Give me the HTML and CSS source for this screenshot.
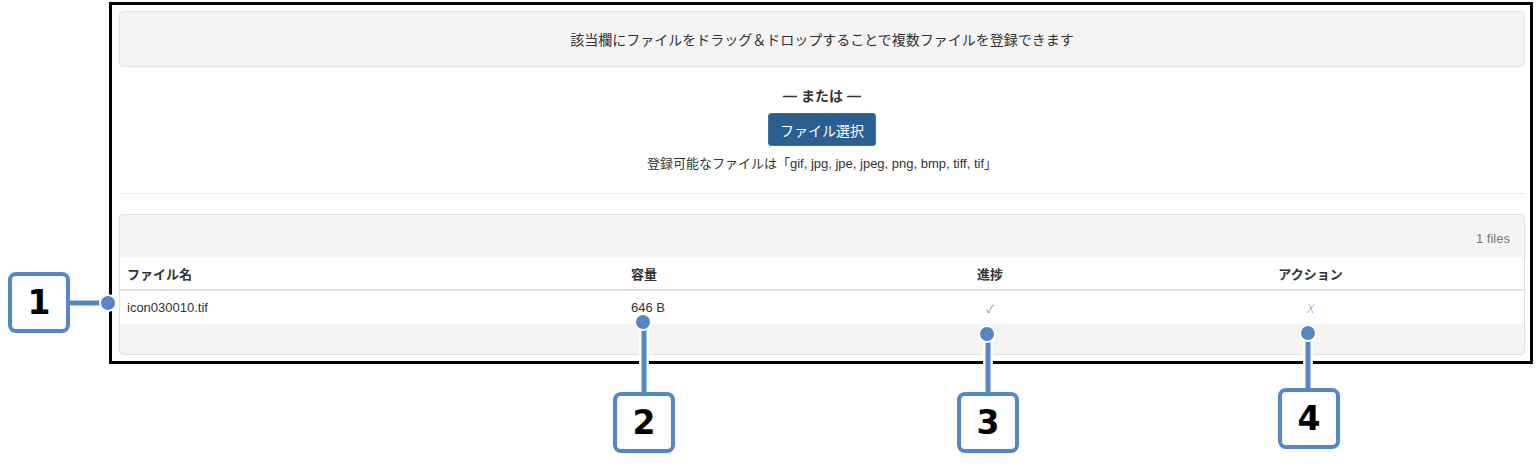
FILE: index.html
```html
<!DOCTYPE html>
<html lang="ja">
<head>
<meta charset="utf-8">
<link rel="stylesheet" href="styles.css">
</head>
<body>
<div class="frame">
  <div class="dropzone">該当欄にファイルをドラッグ＆ドロップすることで複数ファイルを登録できます</div>
  <div class="select-area">
    <div class="or">— または —</div>
    <button class="btn">ファイル選択</button>
    <div class="note">登録可能なファイルは「gif, jpg, jpe, jpeg, png, bmp, tiff, tif」</div>
  </div>
  <div class="sep"></div>
  <div class="files">
    <div class="files-head">1 files</div>
    <table class="tbl">
      <colgroup>
        <col class="c1"><col class="c2"><col class="c3"><col class="c4">
      </colgroup>
      <thead>
        <tr><th>ファイル名</th><th>容量</th><th class="ctr">進捗</th><th class="ctr">アクション</th></tr>
      </thead>
      <tbody>
        <tr><td>icon030010.tif</td><td>646 B</td><td class="ctr check">✓</td><td class="ctr del">X</td></tr>
      </tbody>
    </table>
    <div class="files-foot"></div>
  </div>
</div>

<svg class="leaders" width="1536" height="471" viewBox="0 0 1536 471">
  <g stroke="#fff" stroke-width="10" stroke-linecap="round" fill="none">
    <line x1="70" y1="303" x2="108" y2="303"/>
    <line x1="644" y1="322" x2="644" y2="392"/>
    <line x1="988" y1="334" x2="988" y2="392"/>
    <line x1="1308" y1="333" x2="1308" y2="388"/>
  </g>
  <g stroke="#5586c6" stroke-width="5" fill="none">
    <line x1="70" y1="303" x2="108" y2="303"/>
    <line x1="644" y1="322" x2="644" y2="392"/>
    <line x1="988" y1="334" x2="988" y2="392"/>
    <line x1="1308" y1="333" x2="1308" y2="388"/>
  </g>
  <g fill="#5586c6" stroke="#fff" stroke-width="2">
    <circle cx="108" cy="303" r="8"/>
    <circle cx="643" cy="322" r="8"/>
    <circle cx="987" cy="334" r="8"/>
    <circle cx="1308" cy="333" r="8"/>
  </g>
</svg>
<div class="callout n1">1</div>
<div class="callout n2">2</div>
<div class="callout n3">3</div>
<div class="callout n4">4</div>
</body>
</html>
```

FILE: styles.css
```css
html, body {
  margin: 0;
  padding: 0;
  background: #fff;
}
body {
  font-family: "Liberation Sans", "Noto Sans CJK JP", sans-serif;
  font-size: 13px;
  color: #333;
  position: relative;
  width: 1536px;
  height: 471px;
  overflow: hidden;
}
.frame {
  box-sizing: border-box;
  margin: 2px 0 0 109px;
  width: 1424px;
  height: 362px;
  border: 3px solid #000;
  padding: 6px 5px 0 7px;
}
.dropzone {
  box-sizing: border-box;
  height: 56px;
  background: #f4f4f4;
  border: 1px solid #e3e3e3;
  border-radius: 4px;
  display: flex;
  align-items: center;
  justify-content: center;
  font-size: 14px;
  color: #333;
}
.select-area {
  height: 126px;
  display: flex;
  flex-direction: column;
  align-items: center;
}
.or {
  margin-top: 20px;
  font-size: 14px;
  font-weight: bold;
  line-height: 18px;
  color: #333;
}
.btn {
  margin-top: 8px;
  box-sizing: border-box;
  width: 108px;
  height: 33px;
  background: #2a5f91;
  border: 1px solid #3b74ad;
  border-radius: 3px;
  color: #fff;
  font-family: "Liberation Sans", "Noto Sans CJK JP", sans-serif;
  font-size: 14px;
  padding: 0;
}
.note {
  margin-top: 9px;
  font-size: 13px;
  line-height: 18px;
  color: #333;
}
.sep {
  border-top: 1px dotted #dcdcdc;
  margin-bottom: 20px;
}
.files {
  box-sizing: border-box;
  height: 141px;
  background: #f4f4f4;
  border: 1px solid #e0e0e0;
  border-radius: 4px;
  overflow: hidden;
}
.files-head {
  height: 42px;
  display: flex;
  align-items: center;
  justify-content: flex-end;
  padding-right: 14px;
  color: #777;
  font-size: 13px;
  padding-top: 4px;
  box-sizing: border-box;
}
.tbl {
  width: 100%;
  border-collapse: collapse;
  background: #fff;
  table-layout: fixed;
}
.c1 { width: 504px; }
.c2 { width: 259px; }
.c3 { width: 214px; }
.c4 { width: auto; }
.tbl th {
  text-align: left;
  font-weight: bold;
  font-size: 13px;
  height: 33px;
  padding: 0 7px;
  border-bottom: 2px solid #e2e2e2;
  box-sizing: border-box;
  color: #333;
}
.tbl td {
  height: 33px;
  padding: 0 7px;
  font-size: 13px;
  color: #333;
}
.tbl .ctr { text-align: center; }
.tbl .check { color: #8a8a8a; font-size: 11px; }
.tbl .del {
  color: #6d94cc;
  font-size: 13px;
  font-style: italic;
  font-family: "Open Sans", "Liberation Sans", sans-serif;
  font-weight: 300;
}
.files-foot { height: 30px; }

.leaders {
  position: absolute;
  left: 0;
  top: 0;
  pointer-events: none;
}
.callout {
  position: absolute;
  box-sizing: border-box;
  width: 62px;
  height: 61px;
  border: 4px solid #5586c6;
  border-radius: 8px;
  background: #fff;
  display: flex;
  align-items: center;
  justify-content: center;
  font-family: "DejaVu Sans", "Liberation Sans", sans-serif;
  font-weight: bold;
  font-size: 33px;
  color: #000;
  line-height: 1;
}
.n1 { left: 8px; top: 272px; }
.n2 { left: 613px; top: 392px; }
.n3 { left: 957px; top: 392px; }
.n4 { left: 1278px; top: 388px; }
```
